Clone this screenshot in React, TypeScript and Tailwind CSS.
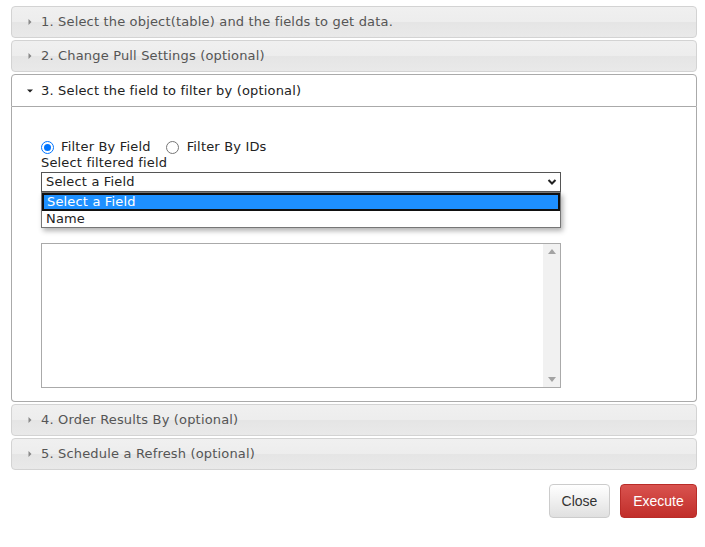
import React from "react";

const font = { fontFamily: '"DejaVu Sans", Verdana, sans-serif', letterSpacing: "0.17px" };

function Tri({ open }: { open?: boolean }) {
  return open ? (
    <svg width="8" height="8" viewBox="0 0 8 8" className="shrink-0">
      <path d="M1 2.5 L7 2.5 L4 5.5 Z" fill="#222" />
    </svg>
  ) : (
    <svg width="8" height="8" viewBox="0 0 8 8" className="shrink-0">
      <path d="M2.5 1 L5.5 4 L2.5 7 Z" fill="#888" />
    </svg>
  );
}

function Header({ text }: { text: string }) {
  return (
    <div className="h-[32px] flex items-center gap-[7px] pl-[14px] rounded-[4px] border border-[#d3d3d3] bg-[linear-gradient(#f0f0f0_0%,#ededed_50%,#e5e5e5_51%,#e9e9e9_100%)] text-[#555] text-[13px]">
      <Tri />
      <span>{text}</span>
    </div>
  );
}

export default function App() {
  return (
    <div className="w-[705px] h-[547px] bg-white pt-[6px] px-[11px]" style={font}>
      <div className="w-[686px] flex flex-col gap-[2px]">
        <Header text="1. Select the object(table) and the fields to get data." />
        <Header text="2. Change Pull Settings (optional)" />
        <div>
          <div className="h-[33px] flex items-center gap-[7px] pl-[14px] rounded-t-[4px] border border-[#aaa] bg-white text-[#222] text-[13px]">
            <Tri open />
            <span>3. Select the field to filter by (optional)</span>
          </div>
          <div className="h-[295px] border border-t-0 border-[#aaa] rounded-b-[4px] bg-white pl-[29px] pt-[32px] text-[13px] text-[#222]">
            <div className="flex items-center h-[16px]">
              <span className="w-[13px] h-[13px] rounded-full border-[1.5px] border-[#0075ff] flex items-center justify-center">
                <span className="w-[7px] h-[7px] rounded-full bg-[#0075ff]" />
              </span>
              <span className="ml-[7px]">Filter By Field</span>
              <span className="ml-[15px] w-[13px] h-[13px] rounded-full border border-[#767676]" />
              <span className="ml-[8px]">Filter By IDs</span>
            </div>
            <div className="h-[16px] leading-[16px]">Select filtered field</div>
            <div className="relative w-[520px] mt-[1px]">
              <div className="h-[20px] border border-[#555] flex items-center justify-between pl-[4px] pr-[3px] bg-white">
                <span>Select a Field</span>
                <svg width="10" height="8" viewBox="0 0 10 8">
                  <path d="M1.5 2 L5 5.5 L8.5 2" stroke="#222" strokeWidth="2" fill="none" />
                </svg>
              </div>
              <div className="absolute left-0 top-[20px] w-[520px] border border-[#767676] bg-white shadow-[2px_3px_5px_rgba(0,0,0,0.3)] z-10">
                <div className="h-[18px] bg-[#1e90ff] border-2 border-[#111] text-white flex items-center pl-[3px]">
                  Select a Field
                </div>
                <div className="h-[16px] flex items-center pl-[4px]">Name</div>
              </div>
            </div>
            <div className="mt-[51px] w-[520px] h-[145px] border border-[#aaa] flex justify-end">
              <div className="w-[17px] h-full bg-[#f1f1f1] flex flex-col items-center justify-between py-[5px]">
                <svg width="8" height="5" viewBox="0 0 8 5"><path d="M0 5 L4 0 L8 5 Z" fill="#a3a3a3" /></svg>
                <svg width="8" height="5" viewBox="0 0 8 5"><path d="M0 0 L4 5 L8 0 Z" fill="#a3a3a3" /></svg>
              </div>
            </div>
          </div>
        </div>
        <Header text="4. Order Results By (optional)" />
        <Header text="5. Schedule a Refresh (optional)" />
        <div className="flex justify-end gap-[10px] mt-[12px]" style={{ fontFamily: '"Liberation Sans", Arial, sans-serif', letterSpacing: "0px" }}>
          <button className="w-[61px] h-[34px] rounded-[4px] border border-[#ccc] bg-[linear-gradient(#ffffff,#e0e0e0)] text-[#333] text-[14px]">
            Close
          </button>
          <button className="w-[77px] h-[34px] rounded-[4px] border border-[#b92c28] bg-[linear-gradient(#d9534f,#c12e2a)] text-white text-[14px]">
            Execute
          </button>
        </div>
      </div>
    </div>
  );
}
